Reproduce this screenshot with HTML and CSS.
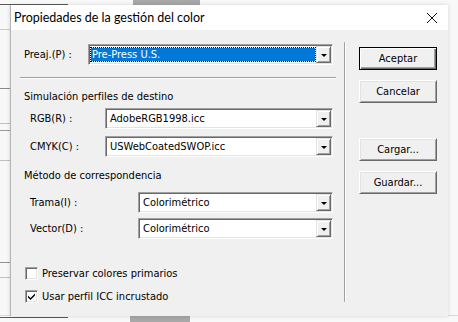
FILE: index.html
```html
<!DOCTYPE html>
<html lang="es">
<head>
    <meta charset="UTF-8">
    <title>Propiedades de la gestión del color</title>
    <link rel="stylesheet" href="styles.css">
</head>
<body>
    <div class="dialog">
        <div class="titlebar">
            <span class="title">Propiedades de la gestión del color</span>
            <svg class="close" width="12" height="12" viewBox="0 0 12 12">
                <path d="M1 1 L11 11 M11 1 L1 11" stroke="#111" stroke-width="1" fill="none"/>
            </svg>
        </div>
        <div class="main">
            <div class="left">
                <div class="row preset">
                    <label class="lbl lbl-preset">Preaj.(P) :</label>
                    <div class="combo combo-preset">
                        <span class="value selected">Pre-Press U.S.</span>
                        <span class="arrow"><span class="tri"></span></span>
                    </div>
                </div>
                <div class="etched"></div>
                <div class="group-title gt-sim">Simulación perfiles de destino</div>
                <div class="row r-rgb">
                    <label class="lbl lbl-profile">RGB(R) :</label>
                    <div class="combo combo-profile">
                        <span class="value">AdobeRGB1998.icc</span>
                        <span class="arrow"><span class="tri"></span></span>
                    </div>
                </div>
                <div class="row r-cmyk">
                    <label class="lbl lbl-profile">CMYK(C) :</label>
                    <div class="combo combo-profile">
                        <span class="value">USWebCoatedSWOP.icc</span>
                        <span class="arrow"><span class="tri"></span></span>
                    </div>
                </div>
                <div class="group-title gt-met">Método de correspondencia</div>
                <div class="row r-trama">
                    <label class="lbl lbl-method">Trama(I) :</label>
                    <div class="combo combo-method">
                        <span class="value">Colorimétrico</span>
                        <span class="arrow"><span class="tri"></span></span>
                    </div>
                </div>
                <div class="row r-vector">
                    <label class="lbl lbl-method">Vector(D) :</label>
                    <div class="combo combo-method">
                        <span class="value">Colorimétrico</span>
                        <span class="arrow"><span class="tri"></span></span>
                    </div>
                </div>
                <div class="check c-first">
                    <span class="box"></span>
                    <span>Preservar colores primarios</span>
                </div>
                <div class="check c-second">
                    <span class="box">
                        <svg width="9" height="9" viewBox="0 0 9 9">
                            <path d="M1 3.5 L3.5 6 L8 1.5 L8 3.5 L3.5 8 L1 5.5 Z" fill="#000"/>
                        </svg>
                    </span>
                    <span>Usar perfil ICC incrustado</span>
                </div>
            </div>
            <div class="vsep"></div>
            <div class="buttons">
                <button class="btn default">Aceptar</button>
                <button class="btn b-cancel">Cancelar</button>
                <button class="btn b-load">Cargar...</button>
                <button class="btn b-save">Guardar...</button>
            </div>
        </div>
    </div>
</body>
</html>
```

FILE: styles.css
```css
body {
    margin: 0;
    padding: 5px 10px 0 10px;
    height: 322px;
    box-sizing: border-box;
    overflow: hidden;
    background-color: #f8f8f8;
    background-image:
        linear-gradient(#5a5a5a, #5a5a5a),
        linear-gradient(#a8a8a8, #a8a8a8),
        linear-gradient(#c8c8c8, #c8c8c8),
        linear-gradient(#8a8a8a, #8a8a8a),
        linear-gradient(#c0c0c0, #c0c0c0),
        linear-gradient(#9a9a9a, #9a9a9a),
        linear-gradient(#c0c0c0, #c0c0c0),
        linear-gradient(#909090, #909090),
        linear-gradient(#c0c0c0, #c0c0c0),
        linear-gradient(#5a5a5a, #5a5a5a),
        linear-gradient(#a8a8a8, #a8a8a8),
        linear-gradient(#d8d8d8, #d8d8d8);
    background-size:
        68px 1px,
        67px 5px,
        10px 1px,
        10px 1px,
        10px 1px,
        10px 1px,
        10px 1px,
        10px 1px,
        10px 1px,
        68px 1px,
        60px 6px,
        458px 1px;
    background-position:
        0 4px,
        133px 0,
        0 29px,
        0 88px,
        0 123px,
        0 130px,
        0 160px,
        0 262px,
        0 277px,
        0 317px,
        130px 316px,
        0 315px;
    background-repeat: no-repeat;
    font-family: "DejaVu Sans Condensed", "DejaVu Sans", sans-serif;
    font-size: 11px;
    color: #000;
}

.dialog {
    width: 438px;
    height: 311px;
    box-sizing: border-box;
    background-color: #f0f0f0;
    border-left: 1px solid #b4b4b4;
    box-shadow: 0 0 4px rgba(0, 0, 0, 0.15);
}

.titlebar {
    height: 25px;
    background-color: #fff;
    display: flex;
    align-items: center;
    justify-content: space-between;
    padding: 0 10px 0 3px;
}

.title {
    font-family: Lato, "Liberation Sans", sans-serif;
    font-size: 12.5px;
    color: #000;
}

.close {
    display: block;
}

.main {
    display: flex;
    padding-left: 9px;
}

.left {
    width: 316px;
}

.row {
    display: flex;
    align-items: center;
    height: 21px;
}

.preset { margin-top: 14px; }
.r-rgb { margin-top: 3px; }
.r-cmyk { margin-top: 7px; }
.r-trama { margin-top: 8px; }
.r-vector { margin-top: 5px; }

.lbl {
    box-sizing: border-box;
    flex: none;
}

.lbl-preset {
    width: 68px;
    padding-left: 4px;
}

.lbl-profile {
    width: 85px;
    padding-left: 10px;
}

.lbl-method {
    width: 118px;
    padding-left: 10px;
}

.combo {
    display: flex;
    height: 21px;
    box-sizing: border-box;
    background-color: #fff;
    border: 1px solid;
    border-color: #a0a0a0 #fff #fff #a0a0a0;
    box-shadow: inset 1px 1px 0 #696969, inset -1px -1px 0 #e3e3e3;
    padding: 1px;
}

.combo-preset { width: 245px; }
.combo-profile { width: 228px; }
.combo-method { width: 195px; }

.value {
    flex: 1;
    display: flex;
    align-items: center;
    padding-left: 3px;
    white-space: nowrap;
}

.value.selected {
    margin: 2px 1px 2px 1px;
    padding-left: 1px;
    background-color: #0078d7;
    color: #fff;
    outline: 1px dotted #000;
}

.arrow {
    width: 15px;
    flex: none;
    box-sizing: border-box;
    background-color: #f0f0f0;
    border: 1px solid;
    border-color: #e3e3e3 #696969 #696969 #e3e3e3;
    box-shadow: inset 1px 1px 0 #fff, inset -1px -1px 0 #a0a0a0;
    display: flex;
    align-items: center;
    justify-content: center;
}

.tri {
    width: 0;
    height: 0;
    border-left: 3px solid transparent;
    border-right: 3px solid transparent;
    border-top: 3px solid #000;
    margin-top: 1px;
}

.etched {
    margin-top: 12px;
    height: 0;
    border-top: 1px solid #a0a0a0;
    border-bottom: 1px solid #fff;
}

.group-title {
    height: 16px;
    line-height: 16px;
    padding-left: 4px;
}

.gt-sim { margin-top: 10px; }
.gt-met { margin-top: 11px; }

.check {
    display: flex;
    align-items: center;
    gap: 4px;
    height: 16px;
    padding-left: 5px;
}

.c-first { margin-top: 26px; }
.c-second { margin-top: 7px; }

.box {
    width: 13px;
    height: 13px;
    box-sizing: border-box;
    background-color: #fff;
    border: 1px solid;
    border-color: #a0a0a0 #fff #fff #a0a0a0;
    box-shadow: inset 1px 1px 0 #696969, inset -1px -1px 0 #e3e3e3;
    display: flex;
    align-items: center;
    justify-content: center;
}

.vsep {
    margin: 12px 0 0 8px;
    width: 0;
    height: 260px;
    border-left: 1px solid #a0a0a0;
    border-right: 1px solid #fff;
}

.buttons {
    display: flex;
    flex-direction: column;
    padding: 17px 0 0 13px;
}

.btn {
    width: 78px;
    height: 23px;
    padding: 0;
    font-family: "DejaVu Sans Condensed", "DejaVu Sans", sans-serif;
    font-size: 11px;
    color: #000;
    background-color: #f0f0f0;
    border: 1px solid;
    border-color: #fff #696969 #696969 #fff;
    box-shadow: inset 1px 1px 0 #e3e3e3, inset -1px -1px 0 #a0a0a0;
}

.btn.default {
    border: 1px solid #000;
    box-shadow: inset 1px 1px 0 #fff, inset -1px -1px 0 #696969, inset -2px -2px 0 #a0a0a0;
}

.b-cancel { margin-top: 10px; }
.b-load { margin-top: 35px; }
.b-save { margin-top: 10px; }
```
